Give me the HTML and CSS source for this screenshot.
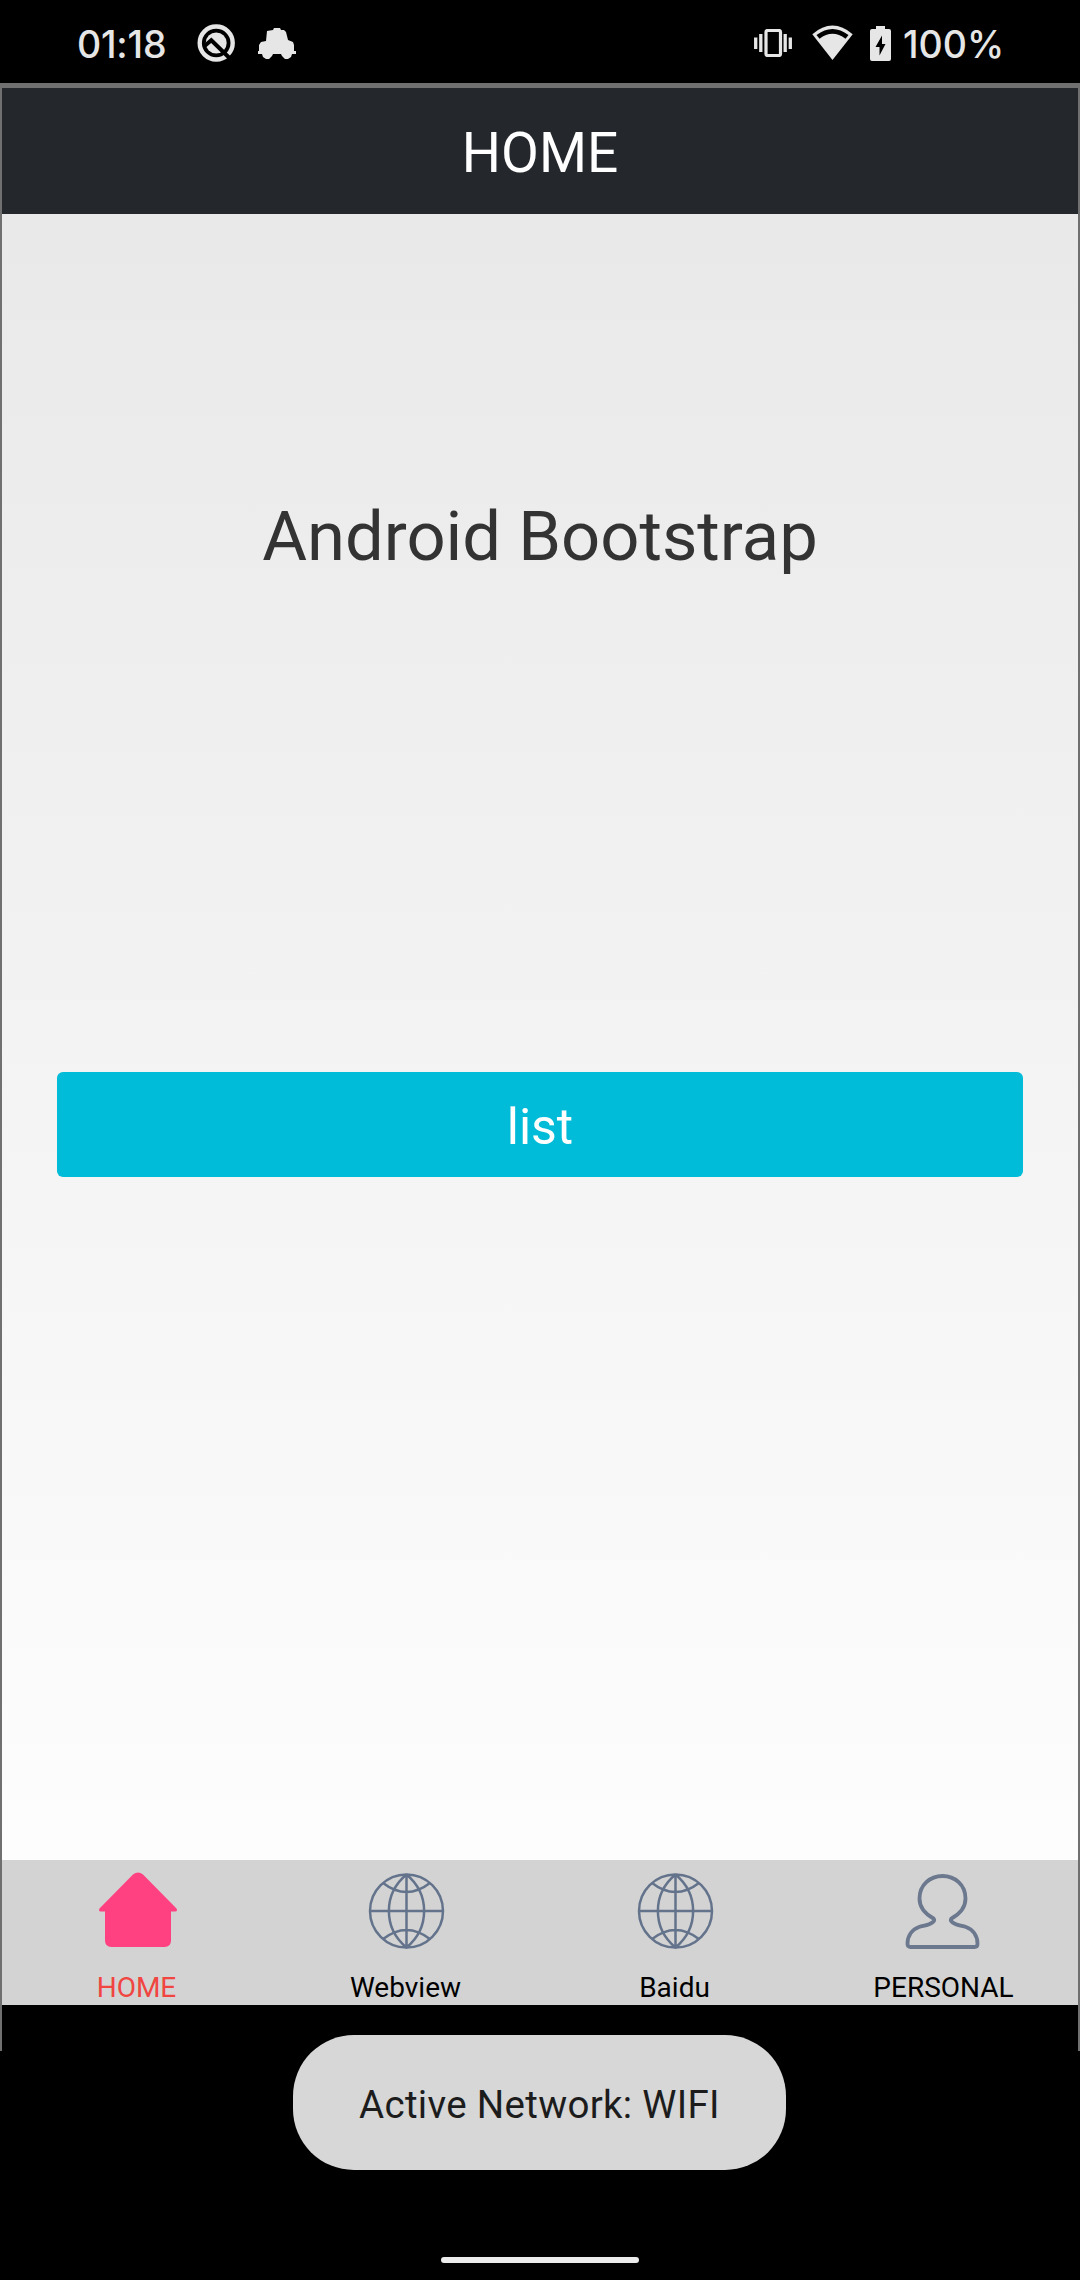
FILE: index.html
```html
<!DOCTYPE html>
<html lang="en">
<head>
<meta charset="utf-8">
<title>Home</title>
<link rel="stylesheet" href="styles.css">
</head>
<body>
<header class="status">
  <div class="status-left">
    <span class="clock">01:18</span>
    <svg class="ico-q" viewBox="0 0 38 38" width="38" height="38">
      <circle cx="19.2" cy="19" r="16.5" fill="none" stroke="#e6e6e6" stroke-width="4.400"/>
      <circle cx="19.2" cy="19" r="10.500" fill="#e6e6e6"/>
      <path d="M7 22.500L14.300 16.300L33.500 35" fill="none" stroke="#000" stroke-width="4"/>
    </svg>
    <svg class="ico-car" viewBox="0 0 38 32" width="38" height="32">
      <path d="M9 3L15 2L16 0H22L23 2H26L28 4L30 12L35 14L36 17V23H38V26H34L33 29L30 31H27L24 28L23 26H15L14 28L11 31H8L5 29L4 26H0V23H1V17L3 14L8 13Z" fill="#e6e6e6"/>
    </svg>
  </div>
  <div class="status-right">
    <svg class="ico-vib" viewBox="0 0 38 28" width="38" height="28">
      <rect x="12" y="1.500" width="14.500" height="25" rx="1.500" fill="none" stroke="#e6e6e6" stroke-width="3.200"/>
      <path d="M1.700 8.500V20M6.800 5V23M31.200 5V23M36.300 8.500V20" stroke="#e6e6e6" stroke-width="3.300"/>
    </svg>
    <svg class="ico-wifi" viewBox="0 0 41 35" width="41" height="35">
      <path d="M0.300 9.200Q20.500 -8 40.700 9.200L20.500 35Z" fill="#e6e6e6"/>
      <path d="M4.500 10Q20.500 -2 36.500 10L33.500 13.700Q20.500 4 7.500 13.700Z" fill="#000"/>
    </svg>
    <svg class="ico-bat" viewBox="0 0 21 35" width="21" height="35">
      <path d="M6 0H15V3H19Q21 3 21 5V33Q21 35 19 35H2Q0 35 0 33V5Q0 3 2 3H6Z" fill="#e6e6e6"/>
      <path d="M12 9.500L5.500 21H9.500V29.500L15.500 18H12Z" fill="#000"/>
    </svg>
    <span class="percent">100%</span>
  </div>
</header>
<div class="app">
  <h1 class="titlebar">HOME</h1>
  <main class="content">
    <p class="headline">Android Bootstrap</p>
    <button class="btn">list</button>
  </main>
  <nav class="tabs">
    <a class="tab active">
      <svg viewBox="0 0 80 80" width="80" height="80"><path d="M36 2.500Q41 -1.500 46 2.500L79.500 36.500Q81 39.500 78 39.500H74V68.500Q74 75 67.500 75H14.500Q8 75 8 68.500V39.500H4Q1 39.500 2.500 36.500Z" fill="#ff4081"/></svg>
      <span>HOME</span>
    </a>
    <a class="tab">
      <svg viewBox="0 0 80 80" width="80" height="80"><g fill="none" stroke="#64738c" stroke-width="2.500"><circle cx="40.500" cy="39" r="36.500"/><path d="M40.500 2.500V75.500M4 39H77M40.500 2.500C17 22 17 56 40.500 75.500C64 56 64 22 40.500 2.500M16.700 10.700Q40.500 29.300 64.300 10.700M16.700 67.300Q40.500 48.700 64.300 67.300"/></g></svg>
      <span>Webview</span>
    </a>
    <a class="tab">
      <svg viewBox="0 0 80 80" width="80" height="80"><g fill="none" stroke="#64738c" stroke-width="2.500"><circle cx="40.500" cy="39" r="36.500"/><path d="M40.500 2.500V75.500M4 39H77M40.500 2.500C17 22 17 56 40.500 75.500C64 56 64 22 40.500 2.500M16.700 10.700Q40.500 29.300 64.300 10.700M16.700 67.300Q40.500 48.700 64.300 67.300"/></g></svg>
      <span>Baidu</span>
    </a>
    <a class="tab">
      <svg viewBox="0 0 80 80" width="80" height="80"><g fill="none" stroke="#6b788e" stroke-width="3.800" stroke-linejoin="round"><path d="M29.500 46.500C20.500 41.500 15.500 34 15.500 26.500C15.500 13 26 4 38.500 4C51 4 61.500 13 61.500 26.500C61.500 34 56.500 41.500 47.500 46.500Q46 48.500 48 50C52 53.500 57 53.500 62 55C69 57.500 73.500 64 73.500 72Q73.500 75 70.500 75H6.500Q3.500 75 3.500 72C3.500 64 8 57.500 15 55C20 53.500 25 53.500 29 50Q31 48.500 29.500 46.500Z"/></g></svg>
      <span>PERSONAL</span>
    </a>
  </nav>
  <div class="below"></div>
</div>
<footer class="system">
  <div class="pill"></div>
</footer>
<div class="toast">Active Network: WIFI</div>
</body>
</html>
```
FILE: styles.css
```css
* { box-sizing: border-box; }
body {
  margin: 0;
  width: 1080px;
  height: 2280px;
  position: relative;
  background: #000;
  font-family: Roboto, sans-serif;
  display: flex;
  flex-direction: column;
  overflow: hidden;
}
svg { display: block; flex: none; }
.status {
  height: 83px;
  display: flex;
  justify-content: space-between;
  padding: 0 77px 0 77px;
  color: #e6e6e6;
  font: 500 37.5px/46px Inter, sans-serif;
}
.status-left, .status-right { display: flex; align-items: flex-start; }
.clock, .percent { margin-top: 22px; white-space: nowrap; }
.clock { width: 120px; letter-spacing: -0.2px; }
.ico-q { margin-top: 24px; }
.ico-car { margin: 28px 0 0 23px; }
.ico-vib { margin-top: 29px; }
.ico-wifi { margin: 25px 0 0 20px; }
.ico-bat { margin: 26px 0 0 17px; }
.percent { width: 100px; margin-left: 12px; }
.app {
  height: 1968px;
  border: solid #707070;
  border-width: 5px 2px 0;
  display: flex;
  flex-direction: column;
}
.titlebar {
  margin: 0;
  height: 126px;
  background: #24272c;
  color: #fff;
  font-weight: 400;
  font-size: 55px;
  line-height: 131px;
  text-align: center;
}
.content {
  height: 1646px;
  padding: 0 55px;
  background: linear-gradient(#e9e9e9, #fdfdfd);
}
.headline {
  margin: 0;
  padding-top: 276px;
  font-size: 68.75px;
  line-height: 94px;
  color: #333;
  text-align: center;
}
.btn {
  display: block;
  width: 100%;
  height: 105px;
  margin-top: 488px;
  padding: 5px 0 0;
  border: 0;
  border-radius: 6px;
  background: #00bcd8;
  color: #fff;
  font: 400 50px/100px Roboto, sans-serif;
}
.tabs {
  height: 145px;
  display: grid;
  grid-template-columns: repeat(4, 1fr);
  background: #d3d3d3;
}
.tab {
  display: flex;
  flex-direction: column;
  align-items: center;
  padding-top: 12px;
  color: #000;
  font-size: 28px;
  line-height: 34px;
}
.tab span { margin-top: 19px; }
.tab.active { color: #f04540; }
.below { flex: 1; background: #000; }
.system {
  flex: 1;
  display: flex;
  justify-content: center;
  align-items: flex-end;
  padding-bottom: 17px;
}
.pill { width: 198px; height: 6px; border-radius: 3px; background: #ececec; }
.toast {
  position: absolute;
  left: 293px;
  top: 2035px;
  width: 493px;
  height: 135px;
  border-radius: 61px;
  background: #d7d7d7;
  color: #1c1c1c;
  font-size: 38.5px;
  letter-spacing: 0.3px;
  line-height: 140px;
  text-align: center;
}
```
